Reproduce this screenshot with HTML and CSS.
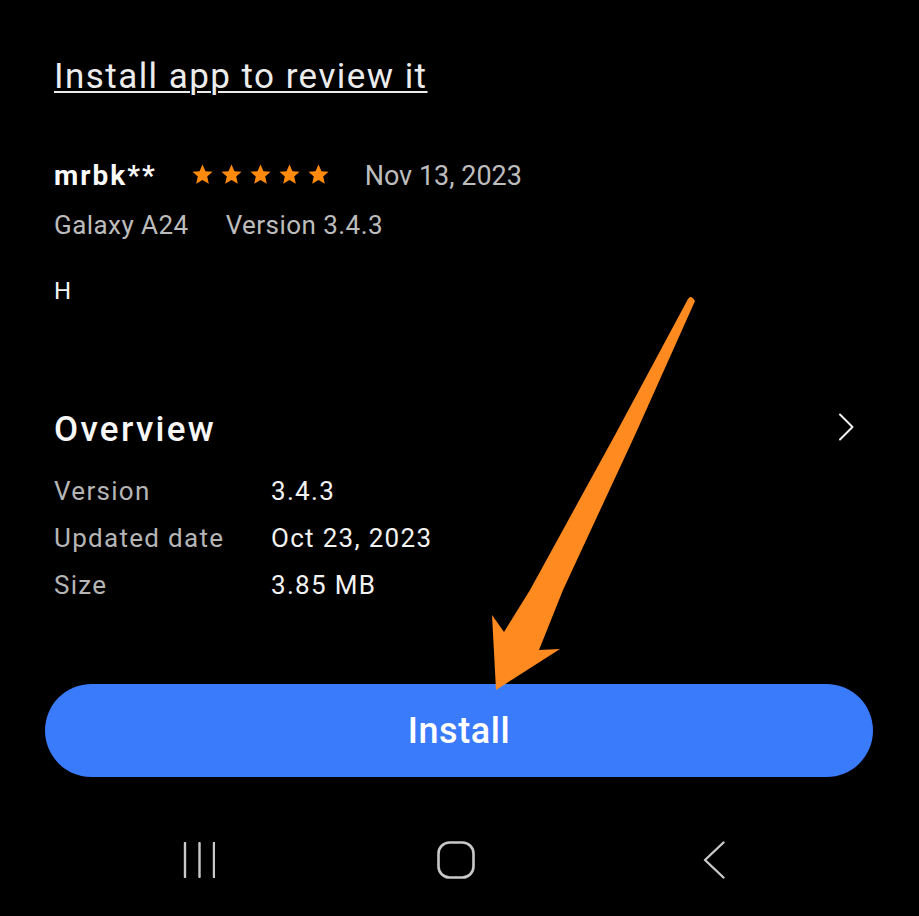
FILE: index.html
```html
<!DOCTYPE html>
<html lang="en">
<head>
<meta charset="utf-8">
<title>App details</title>
<link rel="stylesheet" href="styles.css">
</head>
<body>
<div class="screen">
  <div class="section">
    <a class="review-link">Install app to review it</a>
  </div>

  <div class="section review">
    <div class="review-head">
      <span class="reviewer">mrbk**</span>
      <span class="stars">
        <svg class="star" viewBox="0 0 24 24"><path d="M12 1.6l3.1 6.9 7.4.7-5.6 5 1.7 7.4L12 17.7l-6.6 3.9 1.7-7.4-5.6-5 7.4-.7z"/></svg>
        <svg class="star" viewBox="0 0 24 24"><path d="M12 1.6l3.1 6.9 7.4.7-5.6 5 1.7 7.4L12 17.7l-6.6 3.9 1.7-7.4-5.6-5 7.4-.7z"/></svg>
        <svg class="star" viewBox="0 0 24 24"><path d="M12 1.6l3.1 6.9 7.4.7-5.6 5 1.7 7.4L12 17.7l-6.6 3.9 1.7-7.4-5.6-5 7.4-.7z"/></svg>
        <svg class="star" viewBox="0 0 24 24"><path d="M12 1.6l3.1 6.9 7.4.7-5.6 5 1.7 7.4L12 17.7l-6.6 3.9 1.7-7.4-5.6-5 7.4-.7z"/></svg>
        <svg class="star" viewBox="0 0 24 24"><path d="M12 1.6l3.1 6.9 7.4.7-5.6 5 1.7 7.4L12 17.7l-6.6 3.9 1.7-7.4-5.6-5 7.4-.7z"/></svg>
      </span>
      <span class="review-date">Nov 13, 2023</span>
    </div>
    <div class="review-meta">
      <span>Galaxy A24</span>
      <span>Version 3.4.3</span>
    </div>
    <p class="review-body">H</p>
  </div>

  <div class="section overview">
    <div class="overview-head">
      <h2 class="overview-title">Overview</h2>
      <svg class="chevron" viewBox="0 0 16 28"><path d="M2 1.5L14.5 14 2 26.5"/></svg>
    </div>
    <dl class="info">
      <div class="info-row"><dt>Version</dt><dd>3.4.3</dd></div>
      <div class="info-row"><dt>Updated date</dt><dd>Oct 23, 2023</dd></div>
      <div class="info-row"><dt>Size</dt><dd>3.85 MB</dd></div>
    </dl>
  </div>

  <div class="button-wrap">
    <button class="install-btn">Install</button>
  </div>

  <nav class="navbar">
    <svg class="nav-icon recents" viewBox="0 0 32 36"><path d="M2 1v34M16.5 1v34M31 1v34"/></svg>
    <svg class="nav-icon home" viewBox="0 0 38 38"><rect x="1.5" y="1.5" width="35" height="35" rx="11"/></svg>
    <svg class="nav-icon back" viewBox="0 0 22 38"><path d="M20.5 1.5L2 19l18.5 17.5"/></svg>
  </nav>

  <svg class="annotation" viewBox="0 0 919 916">
    <path d="M688 299 Q691 294 695 301 L635 435 L563 590 L539 650 L560 649 L496 690 L492 615 L504 632 L530 590 L615 435 Z"/>
  </svg>
</div>
</body>
</html>
```
FILE: styles.css
```css
* { box-sizing: border-box; }
html, body {
  margin: 0;
  padding: 0;
  background: #000;
}
body {
  font-family: Roboto, "Noto Sans", "Liberation Sans", sans-serif;
  color: #f2f2f2;
}
.screen {
  position: relative;
  width: 919px;
  height: 916px;
  overflow: hidden;
  padding-top: 57px;
}
.section {
  padding: 0 66px 0 54px;
}
.review-link {
  display: block;
  font-size: 35px;
  line-height: 40px;
  letter-spacing: 1.45px;
  color: #ececec;
  text-decoration: underline;
  text-decoration-thickness: 2px;
  text-underline-offset: 3px;
}
.review {
  margin-top: 63px;
}
.review-head {
  display: flex;
  align-items: center;
  height: 32px;
}
.reviewer {
  font-size: 28px;
  font-weight: 700;
  line-height: 32px;
  letter-spacing: 2px;
  color: #fafafa;
}
.stars {
  display: flex;
  gap: 6px;
  margin-left: 34px;
  margin-top: -3px;
}
.star {
  width: 23px;
  height: 23px;
  fill: #ff8a0d;
}
.review-date {
  margin-left: 35px;
  font-size: 27px;
  line-height: 32px;
  color: #bdbdbd;
}
.review-meta {
  display: flex;
  gap: 37px;
  margin-top: 17px;
  font-size: 26px;
  line-height: 32px;
  letter-spacing: 0.45px;
  color: #bcbcbc;
}
.review-body {
  margin: 35px 0 0;
  font-size: 24px;
  line-height: 30px;
  color: #f5f5f5;
}
.overview {
  margin-top: 104px;
}
.overview-head {
  display: flex;
  align-items: center;
  justify-content: space-between;
}
.overview-title {
  margin: 0;
  font-size: 35px;
  font-weight: 500;
  line-height: 40px;
  letter-spacing: 2.3px;
  color: #f7f7f7;
}
.chevron {
  width: 16px;
  height: 28px;
  fill: none;
  stroke: #f0f0f0;
  stroke-width: 2;
  stroke-linecap: round;
  stroke-linejoin: round;
  margin-right: -1px;
  margin-bottom: 7px;
}
.info {
  margin: 18px 0 0;
}
.info-row {
  display: flex;
  font-size: 26px;
  line-height: 47px;
  letter-spacing: 1.3px;
}
.info-row dt {
  width: 217px;
  color: #b5b5b5;
}
.info-row dd {
  margin: 0;
  color: #f2f2f2;
}
.button-wrap {
  padding: 0 46px 0 45px;
  margin-top: 75px;
}
.install-btn {
  display: flex;
  align-items: center;
  justify-content: center;
  width: 100%;
  height: 93px;
  border: none;
  border-radius: 47px;
  background: #3a7bfc;
  color: #fff;
  font-family: Roboto, "Noto Sans", "Liberation Sans", sans-serif;
  font-size: 36px;
  font-weight: 500;
  letter-spacing: 0.6px;
  padding: 0;
}
.navbar {
  display: grid;
  grid-template-columns: repeat(3, 257px);
  justify-items: center;
  align-items: center;
  height: 70px;
  margin-top: 48px;
  padding-left: 70px;
}
.nav-icon {
  fill: none;
  stroke: #c9c9c9;
  stroke-linecap: round;
  stroke-linejoin: round;
}
.recents {
  width: 32px;
  height: 36px;
  stroke-width: 2.4;
}
.home {
  width: 38px;
  height: 38px;
  stroke-width: 2.6;
}
.back {
  width: 22px;
  height: 38px;
  stroke-width: 2.4;
  margin-left: 2px;
}
.annotation {
  position: absolute;
  top: 0;
  left: 0;
  width: 919px;
  height: 916px;
  fill: #ff8a1f;
  pointer-events: none;
}
```
